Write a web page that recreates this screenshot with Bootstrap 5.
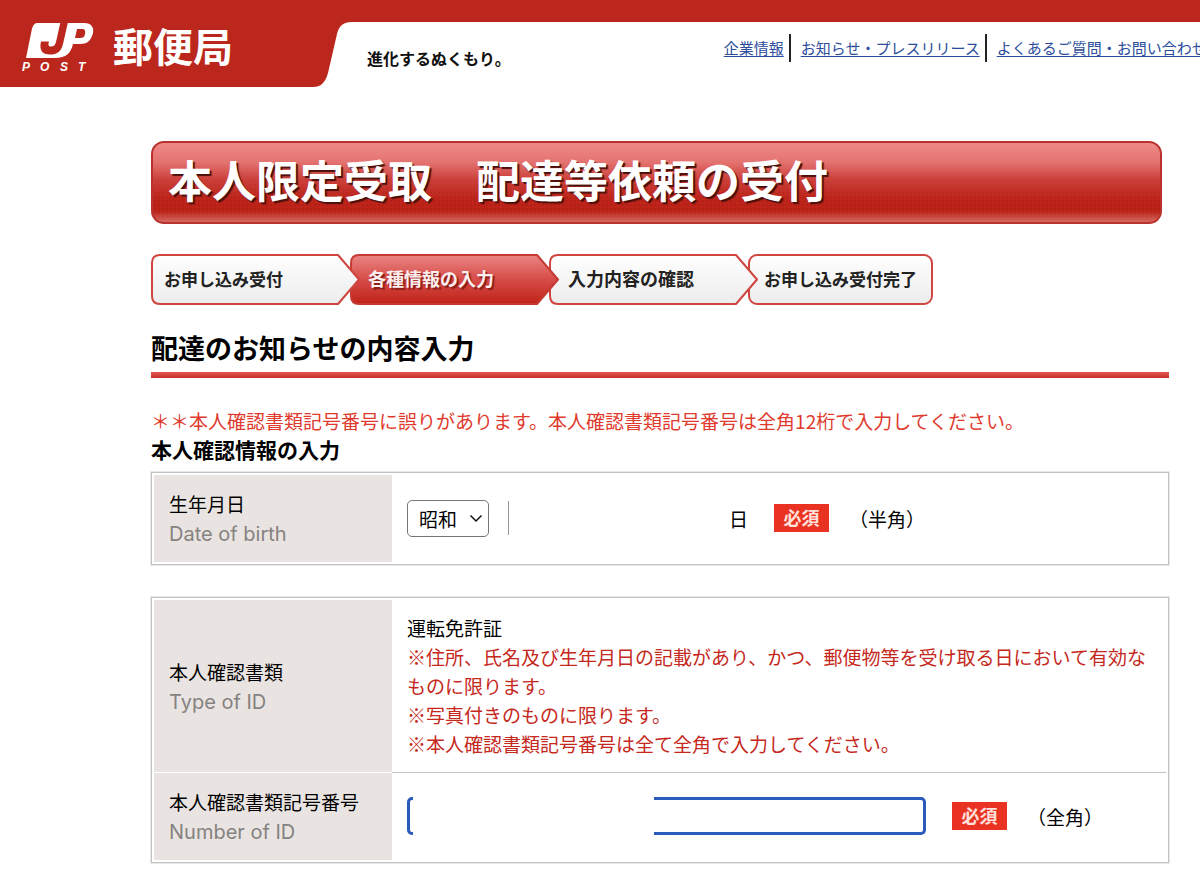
<!DOCTYPE html>
<html lang="ja">
<head>
<meta charset="utf-8">
<meta name="viewport" content="width=device-width, initial-scale=1">
<title>本人限定受取 配達等依頼の受付</title>
<link href="https://cdn.jsdelivr.net/npm/bootstrap@5.3.0/dist/css/bootstrap.min.css" rel="stylesheet">
<style>
  :root { --jp-red: #bb271c; --label-bg: #e9e4e2; --rule: #c2c2c2; }
  body {
    font-family: "Noto Sans CJK JP", sans-serif;
    font-size: 19px; line-height: 29px; color: #000; background: #fff;
    overflow-x: hidden;
  }
  .site-header { background: linear-gradient(var(--jp-red) 22px, #fff 22px); }
  .tagline { font-size: 16px; margin: 44px 0 0 7px; color: #111; }
  .site-links { margin: 34px 0 0 213px; font-size: 15px; line-height: 28px; }
  .site-links a { color: #2b4c9b; text-underline-offset: 2px; }
  .site-links li + li { border-left: 2px solid #222; margin-left: 5px; padding-left: 10px; }
  .page-body { padding: 54px 31px 19px 151px; }
  .page-title {
    font-size: 44px; line-height: 72px; color: #fff; font-weight: 700;
    height: 83px; padding-left: 15px; margin: 0 7px 30px 0;
    border: 2px solid #b9322d; border-radius: 13px;
    text-shadow: 2px 2px 1px #4a100c;
    background:
      linear-gradient(rgba(238,138,136,1), rgba(228,115,112,1) 24%, rgba(205,68,62,.9) 46%, rgba(190,38,28,.6) 70%, rgba(186,34,23,.5) 86%, rgba(212,104,98,1)),
      radial-gradient(#a81a10 1px, #bf2418 1px) 0 0 / 4px 4px;
  }
  .steps { margin-bottom: 23px; }
  .step { width: 199px; height: 51px; line-height: 49px; font-size: 17px; font-weight: 700; color: #222; padding-left: 13px; }
  .step svg { position: absolute; left: 0; top: 0; z-index: -1; }
  .step span { position: relative; }
  .step:nth-child(1) { z-index: 4; }
  .step:nth-child(2) { z-index: 3; padding-left: 18px; font-size: 18px; color: #fbeeee; text-shadow: 2px 2px 1px #8a1d18; }
  .step:nth-child(3) { z-index: 2; padding-left: 19px; font-size: 18px; }
  .step:nth-child(4) { z-index: 1; width: 185px; padding-left: 16px; }
  .section-title {
    font-size: 27px; line-height: 40px; font-weight: 700; margin: 0 0 28px; padding-bottom: 10px;
    background: linear-gradient(#e2564f, #c5322a) bottom / 100% 6px no-repeat;
  }
  .error-text { color: #e03a2d; }
  .sub-title { font-size: 21px; line-height: 29px; font-weight: 700; margin: 0 0 8px; }
  .form-table { border: 1px solid var(--rule); border-collapse: separate; border-spacing: 0; padding: 2px; outline: 1px solid #e9e9e9; }
  .form-table + .form-table { margin-top: 32px; }
  .form-table th { width: 238px; background: var(--label-bg); font-weight: 400; padding: 14px 15px 13px; }
  .form-table td { padding: 13px 15px 14px; }
  .form-table tr + tr th { border-top: 1px solid #fff; }
  .form-table tr + tr td { border-top: 1px solid var(--rule); }
  .form-table label, .en-label { display: block; }
  .en-label { font-family: Inter, sans-serif; font-size: 20px; color: #858280; margin-top: 2px; }
  .note { color: #c5281c; }
  .era-select {
    width: 82px; height: 37px; padding: 0 0 0 11px; font-size: 19px; line-height: 29px; color: #000;
    border: 1px solid #767676; border-radius: 5px;
    background-position: right 5px center; background-size: 14px 14px;
    background-image: url("data:image/svg+xml,%3csvg xmlns='http://www.w3.org/2000/svg' viewBox='0 0 14 14'%3e%3cpath d='M1.500 4.500l5.500 5.500 5.500-5.500' fill='none' stroke='%23111' stroke-width='1.500'/%3e%3c/svg%3e");
  }
  .date-input { width: 221px; height: 34px; margin-left: 19px; border: 0; border-left: 1px solid #999; border-radius: 0; }
  .id-field { width: 519px; }
  .id-field input { height: 38px; border: 3px solid #2a5bbb; border-radius: 5px; }
  .id-cover { position: absolute; left: 6px; top: 0; width: 241px; height: 38px; background: #fff; }
  .need { width: 55px; height: 28px; line-height: 27px; font-size: 18px; font-weight: 700; color: #ffe0db; background: #ea3223; margin: 0 20px 0 26px; }
</style>
</head>
<body>
<header class="site-header d-flex align-items-start">
  <a href="#" class="flex-shrink-0" aria-label="郵便局">
    <svg class="d-block" width="360" height="87" viewBox="0 0 360 87">
      <path fill="#bb271c" d="M0 0H360V22H352C343 22 339 26 337 34L328 73C325 83 321 87 313 87H0Z"/>
      <path fill="#fff" d="M37 23H84C92 23 94 28 93 33C91 41 87 44 80 44H73C71 53 66 58 55 58H26L31.500 31Q33 23 37 23Z"/>
      <path fill="#bb271c" d="M60.500 22H68L63 44C61 52 57 54.500 50 54.500C42 54.500 39 50 41 41.500H49C48 45 48.500 46.500 51 46.500C54 46.500 55 45 56 42Z"/>
      <path fill="#bb271c" d="M77 29H82C85 29 85.500 31 85 34C84.500 37 83 38 80 38H75Z"/>
      <g fill="#fff" font-family="Liberation Sans, sans-serif" font-size="12" font-weight="700" font-style="italic">
        <text x="22" y="71">P</text><text x="40" y="71">O</text><text x="60" y="71">S</text><text x="78" y="71">T</text>
      </g>
      <text x="113" y="62" fill="#fff" font-family="Noto Sans CJK JP, sans-serif" font-size="40" font-weight="700">郵便局</text>
    </svg>
  </a>
  <p class="tagline fw-bold text-nowrap">進化するぬくもり。</p>
  <ul class="site-links list-unstyled d-flex text-nowrap">
    <li><a href="#">企業情報</a></li>
    <li><a href="#">お知らせ・プレスリリース</a></li>
    <li><a href="#">よくあるご質問・お問い合わせ</a></li>
  </ul>
</header>

<main class="page-body">
  <h1 class="page-title text-nowrap">本人限定受取　配達等依頼の受付</h1>

  <svg width="0" height="0" class="position-absolute" aria-hidden="true">
    <defs>
      <linearGradient id="pale" x2="0" y2="1"><stop offset="0" stop-color="#fff"/><stop offset=".3" stop-color="#f9f9f9"/><stop offset="1" stop-color="#ececec"/></linearGradient>
      <linearGradient id="hot" x2="0" y2="1"><stop offset="0" stop-color="#ea8583"/><stop offset=".5" stop-color="#d64c48"/><stop offset="1" stop-color="#c02318"/></linearGradient>
    </defs>
  </svg>
  <ol class="steps list-unstyled d-flex text-nowrap">
    <li class="step position-relative flex-shrink-0"><svg width="210" height="51"><path d="M9 1H187L208 25.500L187 50H9Q1 50 1 42V9Q1 1 9 1Z" fill="url(#pale)" stroke="#cf4540" stroke-width="2" stroke-linejoin="round"/></svg><span>お申し込み受付</span></li>
    <li class="step position-relative flex-shrink-0" aria-current="step"><svg width="210" height="51"><path d="M9 1H187L208 25.500L187 50H9Q1 50 1 42V9Q1 1 9 1Z" fill="url(#hot)" stroke="#c53a35" stroke-width="2" stroke-linejoin="round"/></svg><span>各種情報の入力</span></li>
    <li class="step position-relative flex-shrink-0"><svg width="210" height="51"><path d="M9 1H187L208 25.500L187 50H9Q1 50 1 42V9Q1 1 9 1Z" fill="url(#pale)" stroke="#cf4540" stroke-width="2" stroke-linejoin="round"/></svg><span>入力内容の確認</span></li>
    <li class="step position-relative flex-shrink-0"><svg width="185" height="51"><rect x="1" y="1" width="183" height="49" rx="8" fill="url(#pale)" stroke="#cf4540" stroke-width="2"/></svg><span>お申し込み受付完了</span></li>
  </ol>

  <h2 class="section-title">配達のお知らせの内容入力</h2>
  <form>
    <p class="error-text mb-0">＊＊本人確認書類記号番号に誤りがあります。本人確認書類記号番号は全角12桁で入力してください。</p>
    <h3 class="sub-title">本人確認情報の入力</h3>

    <table class="form-table w-100">
      <tr>
        <th scope="row"><label for="era">生年月日<span class="en-label">Date of birth</span></label></th>
        <td>
          <div class="d-flex align-items-center">
            <select id="era" class="form-select era-select"><option>昭和</option></select>
            <input type="text" class="date-input" id="birth" aria-label="年月日">
            <label for="birth">日</label>
            <span class="need text-center">必須</span>
            <span>（半角）</span>
          </div>
        </td>
      </tr>
    </table>

    <table class="form-table w-100">
      <tr>
        <th scope="row">本人確認書類<span class="en-label">Type of ID</span></th>
        <td>
          運転免許証
          <div class="note">※住所、氏名及び生年月日の記載があり、かつ、郵便物等を受け取る日において有効なものに限ります。<br>※写真付きのものに限ります。<br>※本人確認書類記号番号は全て全角で入力してください。</div>
        </td>
      </tr>
      <tr>
        <th scope="row"><label for="idnum">本人確認書類記号番号<span class="en-label">Number of ID</span></label></th>
        <td>
          <div class="d-flex align-items-center">
            <div class="id-field position-relative">
              <input type="text" id="idnum" class="w-100 d-block">
              <span class="id-cover"></span>
            </div>
            <span class="need text-center">必須</span>
            <span>（全角）</span>
          </div>
        </td>
      </tr>
    </table>
  </form>
</main>
<script src="https://cdn.jsdelivr.net/npm/bootstrap@5.3.0/dist/js/bootstrap.bundle.min.js"></script>
</body>
</html>
